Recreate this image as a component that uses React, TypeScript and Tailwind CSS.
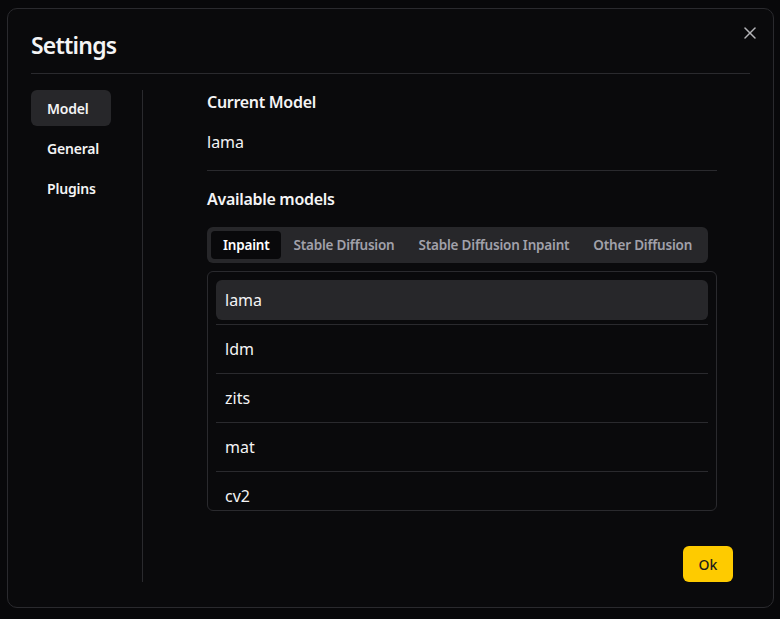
import React from "react";

const models = ["lama", "ldm", "zits", "mat", "cv2"];
const tabs = ["Inpaint", "Stable Diffusion", "Stable Diffusion Inpaint", "Other Diffusion"];

export default function App() {
  return (
    <div
      className="w-[780px] h-[619px] bg-[#08080a] pt-[8px] pl-[7px] overflow-hidden"
      style={{ fontFamily: '"Noto Sans", "Open Sans", sans-serif' }}
    >
      <div className="relative w-[767px] h-[600px] rounded-[10px] border border-[#2a2a2e] bg-[#0a0a0c] px-[23px] pt-[20px] text-[#f4f4f5]">
        <button className="absolute right-[13px] top-[14px] text-[#b4b4b8]">
          <svg width="20" height="20" viewBox="0 0 24 24" fill="none" stroke="currentColor" strokeWidth="1.8" strokeLinecap="round">
            <path d="M18 6 6 18" />
            <path d="m6 6 12 12" />
          </svg>
        </button>
        <div className="border-b border-[#2a2a2e] pb-[12px]">
          <h2 className="text-[23px] leading-[32px] font-semibold tracking-[-0.8px]">Settings</h2>
        </div>
        <div className="flex mt-[16px] h-[492px]">
          <div className="w-[112px] shrink-0 border-r border-[#2a2a2e] flex flex-col gap-[4px]">
            {["Model", "General", "Plugins"].map((s, i) => (
              <div
                key={s}
                className={`w-[80px] h-[36px] flex items-center px-[16px] rounded-[6px] text-[14px] font-semibold tracking-[-0.2px] ${i === 0 ? "bg-[#27272a]" : ""}`}
              >
                {s}
              </div>
            ))}
          </div>
          <div className="flex-1 pl-[64px] flex flex-col">
            <div className="w-[510px] flex flex-col">
              <div className="text-[16px] leading-[24px] font-semibold tracking-[-0.3px]">Current Model</div>
              <div className="text-[16px] leading-[24px] mt-[16px]">lama</div>
              <div className="h-px bg-[#2a2a2e] mt-[16px]" />
              <div className="text-[16px] leading-[24px] font-semibold mt-[16px] tracking-[-0.3px]">Available models</div>
              <div className="mt-[16px] self-start h-[36px] rounded-[6px] bg-[#27272a] p-[4px] flex items-center">
                {tabs.map((t, i) => (
                  <div
                    key={t}
                    className={`h-[28px] px-[12px] flex items-center whitespace-nowrap rounded-[4px] text-[13.5px] font-semibold tracking-[-0.2px] ${i === 0 ? "bg-[#09090b] text-white" : "text-[#a1a1aa]"}`}
                  >
                    {t}
                  </div>
                ))}
              </div>
              <div className="mt-[8px] h-[240px] rounded-[6px] border border-[#2a2a2e] px-[8px] pt-[8px] overflow-hidden">
                {models.map((m, i) => (
                  <div key={m}>
                    {i > 0 && <div className="h-px bg-[#2a2a2e] my-[4px]" />}
                    <div
                      className={`h-[40px] flex items-center px-[9px] rounded-[6px] text-[16px] ${i === 0 ? "bg-[#27272a]" : ""}`}
                    >
                      {m}
                    </div>
                  </div>
                ))}
              </div>
            </div>
            <div className="mt-auto flex justify-end pr-[17px]">
              <button className="w-[50px] h-[36px] rounded-[6px] bg-[#fecb00] text-[#1c1c1c] text-[14px] font-medium">
                Ok
              </button>
            </div>
          </div>
        </div>
      </div>
    </div>
  );
}
